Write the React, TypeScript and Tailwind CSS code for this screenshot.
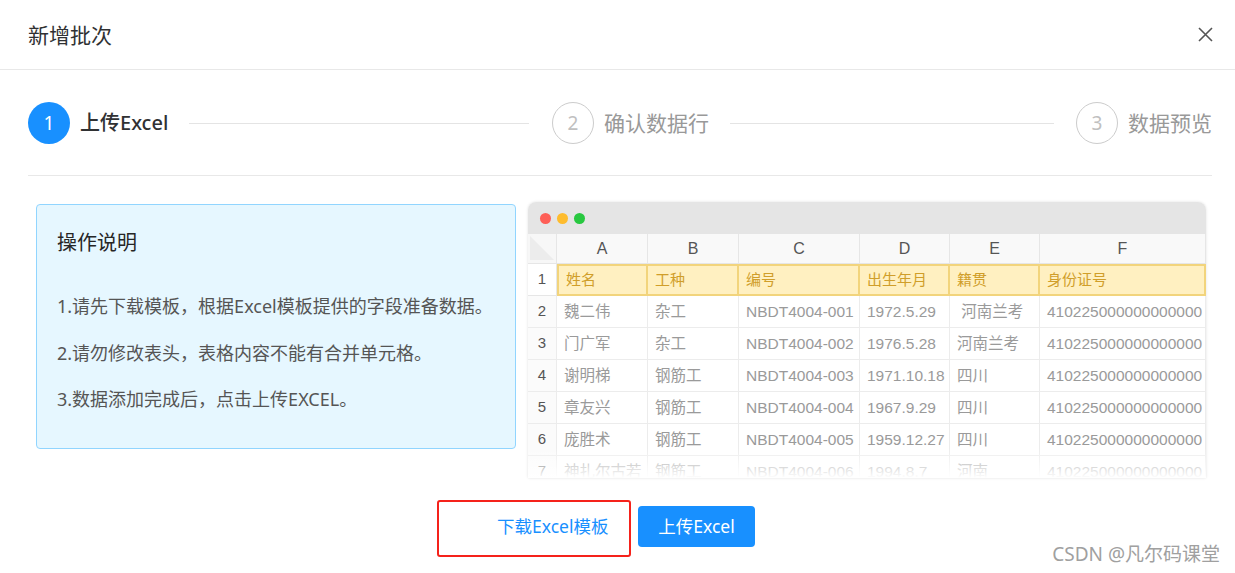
import React from "react";

const cols = ["A", "B", "C", "D", "E", "F"];
const header = ["姓名", "工种", "编号", "出生年月", "籍贯", "身份证号"];
const rows = [
  ["魏二伟", "杂工", "NBDT4004-001", "1972.5.29", " 河南兰考", "410225000000000000"],
  ["门广军", "杂工", "NBDT4004-002", "1976.5.28", "河南兰考", "410225000000000000"],
  ["谢明梯", "钢筋工", "NBDT4004-003", "1971.10.18", "四川", "410225000000000000"],
  ["章友兴", "钢筋工", "NBDT4004-004", "1967.9.29", "四川", "410225000000000000"],
  ["庞胜术", "钢筋工", "NBDT4004-005", "1959.12.27", "四川", "410225000000000000"],
  ["神扎尔古若", "钢筋工", "NBDT4004-006", "1994.8.7", "河南", "410225000000000000"],
];

const font = { fontFamily: '"Noto Sans", "Noto Sans CJK SC", sans-serif' };
const tableFont = { fontFamily: '"Liberation Sans", "Noto Sans CJK SC", sans-serif' };

function Circle({ n, active }: { n: number; active?: boolean }) {
  return (
    <div
      className={
        active
          ? "w-[42px] h-[42px] shrink-0 rounded-full bg-[#1890ff] text-white flex items-center justify-center text-[19px]"
          : "w-[42px] h-[42px] shrink-0 rounded-full border border-[#cccccc] text-[#c0c0c0] flex items-center justify-center text-[19px]"
      }
    >
      {n}
    </div>
  );
}

export default function App() {
  return (
    <div className="w-[1235px] h-[573px] bg-white relative overflow-hidden" style={font}>
      {/* header */}
      <div className="h-[70px] border-b border-[#e8e8e8] flex items-center justify-between pl-[28px] pr-[22px]">
        <div className="text-[21px] text-[#303133] leading-[28px]">新增批次</div>
        <svg width="15" height="15" viewBox="0 0 15 15">
          <path d="M1 1 L14 14 M14 1 L1 14" stroke="#555" strokeWidth="1.6" fill="none" />
        </svg>
      </div>

      <div className="pl-[28px] pr-[23px]">
        {/* steps */}
        <div className="flex items-center pt-[32px] pb-[31px] border-b border-[#e8e8e8]">
          <div className="flex-1 flex items-center mr-[16px] min-w-0">
            <Circle n={1} active />
            <div className="ml-[10px] text-[20px] leading-[28px] text-[#303133] font-medium shrink-0">上传Excel</div>
            <div className="flex-1 h-px bg-[#e4e4e4] ml-[21px] mr-[7px]" />
          </div>
          <div className="flex-1 flex items-center mr-[16px] min-w-0">
            <Circle n={2} />
            <div className="ml-[10px] text-[21px] leading-[28px] text-[#999999] shrink-0">确认数据行</div>
            <div className="flex-1 h-px bg-[#e4e4e4] ml-[21px] mr-[6px]" />
          </div>
          <div className="flex items-center shrink-0">
            <Circle n={3} />
            <div className="ml-[10px] text-[21px] leading-[28px] text-[#999999]">数据预览</div>
          </div>
        </div>

        {/* content */}
        <div className="flex items-start pt-[26px]">
          <div className="ml-[8px] mt-[2px] w-[480px] h-[245px] bg-[#e6f7ff] border border-[#91d5ff] rounded-[4px] pl-[20px] pt-[23px]">
            <div className="text-[20px] leading-[30px] text-[#262626]">操作说明</div>
            <div className="mt-[35px] text-[18px] leading-[26px] text-[#555555] flex flex-col gap-[20.5px]">
              <div>1.请先下载模板，根据Excel模板提供的字段准备数据。</div>
              <div>2.请勿修改表头，表格内容不能有合并单元格。</div>
              <div>3.数据添加完成后，点击上传EXCEL。</div>
            </div>
          </div>

          <div className="ml-[12px] w-[678px] h-[276px] relative overflow-hidden rounded-t-[8px] shadow-[0_0_3px_rgba(0,0,0,0.12)]" style={tableFont}>
            <div className="h-[32px] bg-[#e5e5e5] flex items-center pl-[12px] gap-[6px]">
              <div className="w-[11px] h-[11px] rounded-full bg-[#fe5f57]" />
              <div className="w-[11px] h-[11px] rounded-full bg-[#febc2e]" />
              <div className="w-[11px] h-[11px] rounded-full bg-[#28c840]" />
            </div>
            <div className="grid grid-cols-[29px_91px_91px_121px_90px_90px_166px] bg-white">
              {/* column header row */}
              <div className="h-[30px] bg-[#f7f7f7] border-r border-b border-[#e6e6e6] relative overflow-hidden">
                <div className="absolute left-[2px] bottom-[3px] w-0 h-0 border-l-[24px] border-l-transparent border-b-[24px] border-b-[#ececec] rotate-90" />
              </div>
              {cols.map((c) => (
                <div key={c} className="h-[30px] bg-[#f9f9f9] border-r border-b border-[#e6e6e6] flex items-center justify-center text-[16px] text-[#555555]">
                  {c}
                </div>
              ))}
              {/* row 1 */}
              <div className="h-[32px] border-r border-b border-[#e6e6e6] flex items-center justify-center text-[15px] text-[#555555]">1</div>
              {header.map((h, i) => (
                <div
                  key={h}
                  className={
                    "h-[32px] bg-[#fff0c1] border-y-2 border-r-2 border-[#f2d47c] flex items-center pl-[7px] text-[15px] text-[#d09e2a]" +
                    (i === 0 ? " border-l-2" : "")
                  }
                >
                  {h}
                </div>
              ))}
              {rows.map((r, ri) => (
                <React.Fragment key={ri}>
                  <div className="h-[32px] border-r border-b border-[#ececec] bg-[#fbfbfb] flex items-center justify-center text-[15px] text-[#555555]">
                    {ri + 2}
                  </div>
                  {r.map((v, ci) => (
                    <div
                      key={ci}
                      className="h-[32px] border-r border-b border-[#ececec] flex items-center pl-[7px] text-[15.5px] text-[#9a9a9a] whitespace-pre overflow-hidden"
                    >
                      {v}
                    </div>
                  ))}
                </React.Fragment>
              ))}
            </div>
            <div className="absolute left-0 right-0 bottom-0 h-[30px] bg-gradient-to-t from-white to-transparent" />
          </div>
        </div>

        {/* buttons */}
        <div className="flex justify-center items-center mt-[28px] mr-[8px]">
          <div className="relative h-[41px] w-[154px] flex items-center pl-[20px] text-[17.5px] text-[#1890ff] whitespace-nowrap">
            下载Excel模板
            <div className="absolute left-[-40px] top-[-6px] w-[194px] h-[57px] border-[2.5px] border-[#f5221b] rounded-[3px]" />
          </div>
          <div className="ml-[7px] h-[41px] w-[117px] rounded-[4px] bg-[#1890ff] text-white text-[17.5px] flex items-center justify-center">
            上传Excel
          </div>
        </div>
      </div>

      <div className="absolute right-[15px] bottom-[7px] text-[19px] text-[#a0a0a0] leading-[24px]">CSDN @凡尔码课堂</div>
    </div>
  );
}
